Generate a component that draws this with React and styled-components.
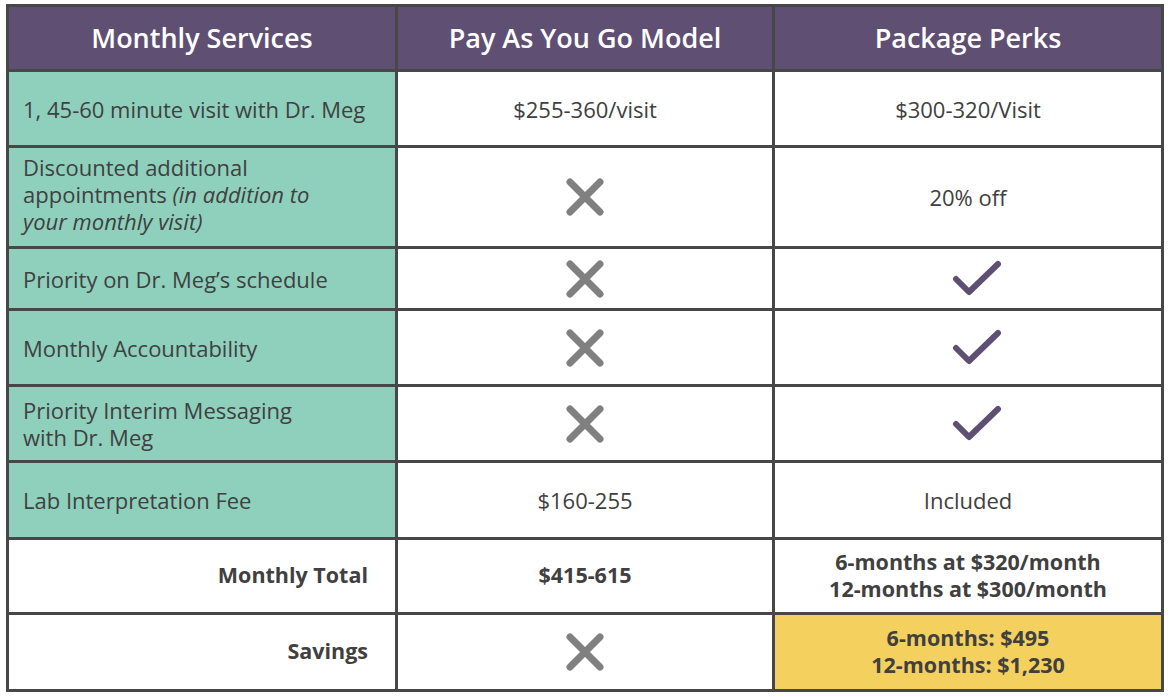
import styled, { createGlobalStyle } from "styled-components";

const GlobalStyle = createGlobalStyle`
  body {
    margin: 0;
    background: #ffffff;
    font-family: "Open Sans", "Liberation Sans", sans-serif;
  }
`;

const rows = [
  { label: "1, 45-60 minute visit with Dr. Meg", payg: "$255-360/visit", perk: "$300-320/Visit", h: 76 },
  {
    label: (
      <>
        Discounted additional
        <br />
        appointments <em>(in addition to
        <br />
        your monthly visit)</em>
      </>
    ),
    payg: "x",
    perk: "20% off",
    h: 101,
    lift: 7,
  },
  { label: "Priority on Dr. Meg’s schedule", payg: "x", perk: "check", h: 62 },
  { label: "Monthly Accountability", payg: "x", perk: "check", h: 76 },
  {
    label: (
      <>
        Priority Interim Messaging
        <br />
        with Dr. Meg
      </>
    ),
    payg: "x",
    perk: "check",
    h: 76,
  },
  { label: "Lab Interpretation Fee", payg: "$160-255", perk: "Included", h: 77 },
];

const Cross = () => (
  <svg width="40" height="40" viewBox="0 0 40 40">
    <path
      d="M5 5 L35 35 M35 5 L5 35"
      stroke="#808080"
      strokeWidth="7"
      strokeLinecap="round"
      fill="none"
    />
  </svg>
);

const Check = () => (
  <svg width="50" height="38" viewBox="0 0 50 38">
    <path
      d="M4 19 L17 32 L46 4"
      stroke="#5f5073"
      strokeWidth="6"
      strokeLinecap="round"
      strokeLinejoin="round"
      fill="none"
    />
  </svg>
);

const renderValue = (v) => {
  if (v === "x") return <Cross />;
  if (v === "check") return <Check />;
  return v;
};

export default function App() {
  return (
    <>
      <GlobalStyle />
      <Page>
        <Table>
          <colgroup>
            <col style={{ width: 389 }} />
            <col style={{ width: 377 }} />
            <col style={{ width: 389 }} />
          </colgroup>
          <thead>
            <tr>
              <HeadCell>Monthly Services</HeadCell>
              <HeadCell>Pay As You Go Model</HeadCell>
              <HeadCell>Package Perks</HeadCell>
            </tr>
          </thead>
          <tbody>
            {rows.map((r, i) => (
              <tr key={i}>
                <LabelCell $h={r.h} $lift={r.lift || 0}>
                  {r.label}
                </LabelCell>
                <ValueCell $h={r.h} $icon={r.payg === "x"}>
                  {renderValue(r.payg)}
                </ValueCell>
                <ValueCell
                  $h={r.h}
                  $icon={r.perk === "check"}
                  $shift={r.perk === "check" ? 9 : 0}
                >
                  {renderValue(r.perk)}
                </ValueCell>
              </tr>
            ))}
            <tr>
              <TotalLabel $h={75}>Monthly Total</TotalLabel>
              <ValueCell $h={75} $bold>
                $415-615
              </ValueCell>
              <ValueCell $h={75} $bold>
                6-months at $320/month
                <br />
                12-months at $300/month
              </ValueCell>
            </tr>
            <tr>
              <TotalLabel $h={77}>Savings</TotalLabel>
              <ValueCell $h={77} $icon>
                <Cross />
              </ValueCell>
              <ValueCell $h={77} $bold $highlight>
                6-months: $495
                <br />
                12-months: $1,230
              </ValueCell>
            </tr>
          </tbody>
        </Table>
      </Page>
    </>
  );
}

const Page = styled.div`
  padding: 4px 0 0 6px;
`;

const Table = styled.table`
  border-collapse: collapse;
  table-layout: fixed;
  width: 1158px;
  color: #404040;
  td,
  th {
    border: 3px solid #474747;
    box-sizing: border-box;
  }
`;

const HeadCell = styled.th`
  height: 65px;
  background: #5f5073;
  color: #ffffff;
  font-size: 27px;
  font-weight: 600;
  text-align: center;
  vertical-align: middle;
  padding: 0 0 2px;
`;

const LabelCell = styled.td`
  height: ${(p) => p.$h}px;
  background: #8fd0bd;
  font-size: 22px;
  font-weight: 500;
  line-height: 27px;
  padding: 1px 8px ${(p) => p.$lift}px 14px;
  vertical-align: middle;
  white-space: nowrap;
  em {
    font-style: italic;
  }
`;

const TotalLabel = styled.td`
  height: ${(p) => p.$h}px;
  background: #ffffff;
  font-size: 21.5px;
  font-weight: 700;
  text-align: right;
  padding: 0 27px 3px 10px;
  vertical-align: middle;
`;

const ValueCell = styled.td`
  height: ${(p) => p.$h}px;
  background: ${(p) => (p.$highlight ? "#f4d05e" : "#ffffff")};
  font-size: ${(p) => (p.$bold ? "21.5px" : "22px")};
  line-height: 27px;
  font-weight: ${(p) => (p.$bold ? 700 : 500)};
  text-align: center;
  vertical-align: middle;
  padding: ${(p) => (p.$icon ? "0" : p.$bold ? "0 0 3px" : "1px 0 0")};
  svg {
    display: block;
    margin: 0 auto;
    transform: translateX(${(p) => p.$shift || 0}px);
  }
`;
